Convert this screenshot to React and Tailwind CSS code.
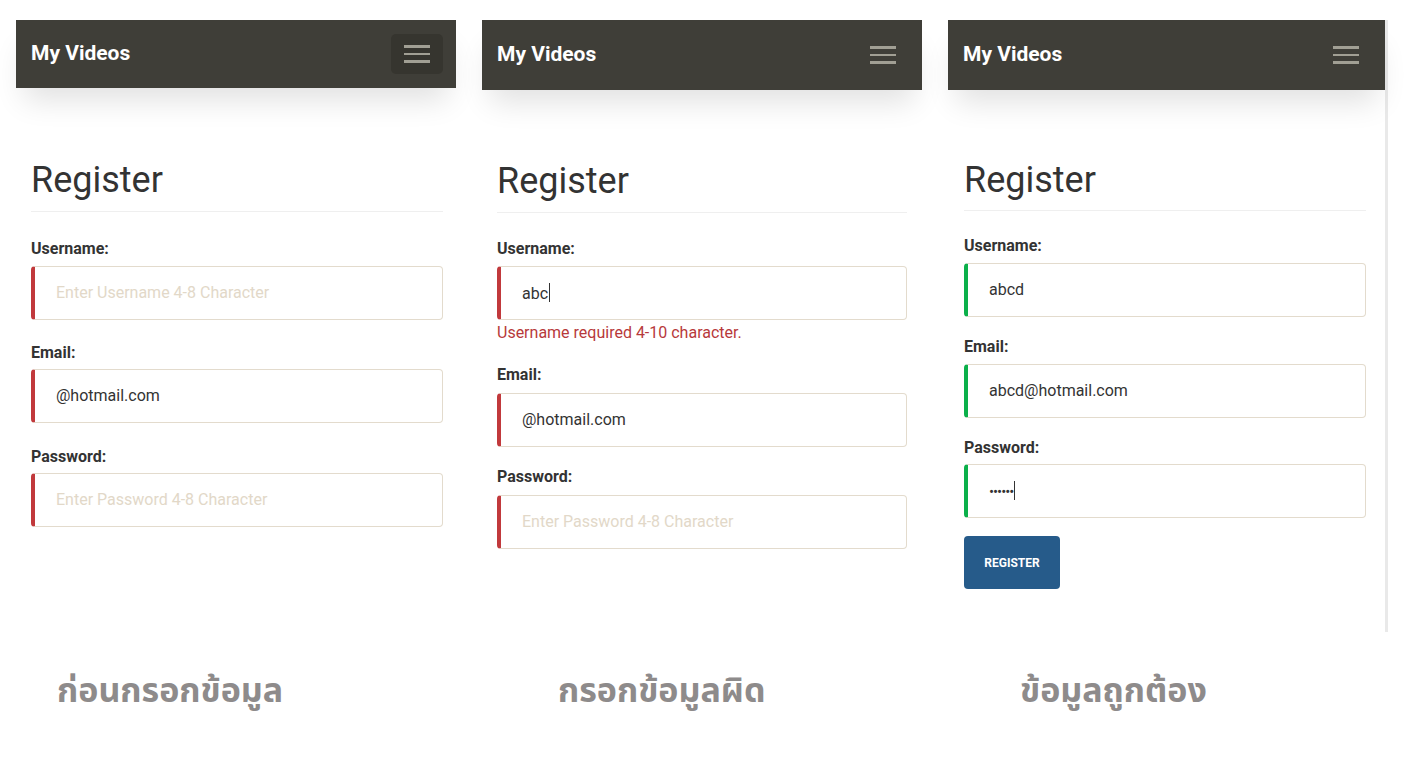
const font = { fontFamily: 'Roboto, "Liberation Sans", sans-serif' }

function Burger({ boxed }) {
  return (
    <div className={`flex w-[52px] h-[40px] flex-col items-center justify-center gap-[5px] rounded-[5px] ${boxed ? 'bg-[#36352f]' : ''}`}>
      <span className="block h-[2.5px] w-[26px] bg-[#a19f94]" />
      <span className="block h-[2.5px] w-[26px] bg-[#a19f94]" />
      <span className="block h-[2.5px] w-[26px] bg-[#a19f94]" />
    </div>
  )
}

function Field({ label, value, placeholder, ok, caret, password, error, labelTop, inputTop }) {
  return (
    <div className={labelTop}>
      <div className="text-[16px] leading-[20px] font-bold text-[#333]">{label}</div>
      <div
        className={`${inputTop} flex h-[54px] items-center rounded-[4px] border border-[#e3dbcd] border-l-4 pl-[21px] text-[16px] ${
          ok ? 'border-l-[#0bb04a]' : 'border-l-[#c1393c]'
        }`}
      >
        {value ? (
          <span className={`text-[#333] ${password ? 'tracking-[-1px] text-[15px]' : ''}`}>
            {value}
            {caret && <span className="ml-[1px] inline-block h-[19px] w-[1px] translate-y-[3px] bg-[#333]" />}
          </span>
        ) : (
          <span className="text-[#e2d8c8]">{placeholder}</span>
        )}
      </div>
      {error && <div className="mt-[3px] text-[16px] leading-[20px] text-[#b7393b]">{error}</div>}
    </div>
  )
}

function Navbar({ h, boxed }) {
  return (
    <div
      className={`relative z-10 flex ${h} items-center justify-between bg-[#3f3e38] pl-[15px] pr-[13px] shadow-[0_20px_30px_-8px_rgba(0,0,0,0.12)]`}
    >
      <span className="text-[21px] font-bold text-white">My Videos</span>
      <Burger boxed={boxed} />
    </div>
  )
}

export default function App() {
  return (
    <div className="h-[760px] w-[1404px] overflow-hidden bg-white" style={font}>
      <div className="flex items-start gap-[26px] pl-[16px] pt-[20px]">
        {/* before filling */}
        <div className="h-[612px] w-[440px]">
          <Navbar h="h-[68px]" boxed />
          <div className="px-[15px] pr-[13px]">
            <h1 className="mt-[72px] text-[36px] leading-[40px] text-[#333]">Register</h1>
            <div className="mt-[11px] border-t border-[#efefef]" />
            <Field label="Username:" placeholder="Enter Username 4-8 Character" labelTop="mt-[27px]" inputTop="mt-[7px]" />
            <Field label="Email:" value="@hotmail.com" labelTop="mt-[23px]" inputTop="mt-[6px]" />
            <Field label="Password:" placeholder="Enter Password 4-8 Character" labelTop="mt-[24px]" inputTop="mt-[6px]" />
          </div>
        </div>

        {/* wrong input */}
        <div className="h-[612px] w-[440px]">
          <Navbar h="h-[70px]" />
          <div className="px-[15px] pr-[15px]">
            <h1 className="mt-[71px] text-[36px] leading-[40px] text-[#333]">Register</h1>
            <div className="mt-[11px] border-t border-[#efefef]" />
            <Field
              label="Username:"
              value="abc"
              caret
              error="Username required 4-10 character."
              labelTop="mt-[26px]"
              inputTop="mt-[7px]"
            />
            <Field label="Email:" value="@hotmail.com" labelTop="mt-[22px]" inputTop="mt-[8px]" />
            <Field label="Password:" placeholder="Enter Password 4-8 Character" labelTop="mt-[20px]" inputTop="mt-[8px]" />
          </div>
        </div>

        {/* correct input */}
        <div className="h-[612px] w-[440px] border-r-[3px] border-[#e9e9e9]">
          <Navbar h="h-[70px]" />
          <div className="pl-[16px] pr-[19px]">
            <h1 className="mt-[70px] text-[36px] leading-[40px] text-[#333]">Register</h1>
            <div className="mt-[10px] border-t border-[#efefef]" />
            <Field label="Username:" value="abcd" ok labelTop="mt-[25px]" inputTop="mt-[7px]" />
            <Field label="Email:" value="abcd@hotmail.com" ok labelTop="mt-[20px]" inputTop="mt-[7px]" />
            <Field label="Password:" value="••••••" ok caret password labelTop="mt-[20px]" inputTop="mt-[6px]" />
            <button className="mt-[18px] h-[53px] w-[96px] rounded-[4px] bg-[#265b8a] text-[12px] font-bold text-white">
              REGISTER
            </button>
          </div>
        </div>
      </div>

      <div
        className="mt-[36px] flex text-[34px] font-bold leading-[48px] text-[#8e8b8b]"
        style={{ fontFamily: '"Noto Sans Thai", "Noto Sans", "DejaVu Sans", sans-serif' }}
      >
        <div className="w-[492px] pl-[57px]">ก่อนกรอกข้อมูล</div>
        <div className="w-[466px] pl-[66px]">กรอกข้อมูลผิด</div>
        <div className="pl-[62px]">ข้อมูลถูกต้อง</div>
      </div>
    </div>
  )
}
